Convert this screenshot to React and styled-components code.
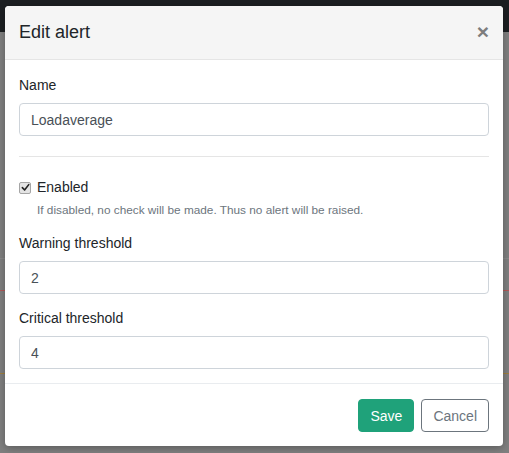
import React from "react";
import styled, { createGlobalStyle } from "styled-components";

const GlobalStyle = createGlobalStyle`
  html, body {
    margin: 0;
    padding: 0;
    height: 100%;
  }
  body {
    font-family: "Liberation Sans", Arial, sans-serif;
    color: #212529;
    background: #808080;
    overflow: hidden;
  }
`;

const App = () => {
  return (
    <>
      <GlobalStyle />
      <Page>
        <TopBar />
        <Backdrop>
          <ChartLine $top={258} $color="#8a8a8a" />
          <ChartLine $top={290} $color="#b35a5a" />
          <ChartLine $top={373} $color="#a08040" />
          <Dialog>
            <Header>
              <Title>Edit alert</Title>
              <CloseButton aria-label="Close">×</CloseButton>
            </Header>
            <Body>
              <Group>
                <Label>Name</Label>
                <Input defaultValue="Loadaverage" />
              </Group>
              <Divider />
              <CheckRow>
                <CheckBox role="checkbox" aria-checked="true">
                  <svg width="9" height="9" viewBox="0 0 10 10">
                    <path d="M1.5 5.2 L4 7.8 L8.6 1.8" fill="none" stroke="#222" strokeWidth="1.8" strokeLinecap="round" strokeLinejoin="round" />
                  </svg>
                </CheckBox>
                <CheckLabel>Enabled</CheckLabel>
              </CheckRow>
              <Help>If disabled, no check will be made. Thus no alert will be raised.</Help>
              <Group>
                <Label>Warning threshold</Label>
                <Input defaultValue="2" />
              </Group>
              <Group $last>
                <Label>Critical threshold</Label>
                <Input defaultValue="4" />
              </Group>
            </Body>
            <Footer>
              <Button $variant="primary">Save</Button>
              <Button>Cancel</Button>
            </Footer>
          </Dialog>
        </Backdrop>
      </Page>
    </>
  );
};

const Page = styled.div`
  width: 509px;
  height: 453px;
  display: flex;
  flex-direction: column;
  background: #808080;
`;

const TopBar = styled.div`
  height: 32px;
  background: #1c1f22;
  flex-shrink: 0;
`;

const Backdrop = styled.div`
  position: relative;
  flex: 1;
  background: #808080;
`;

const ChartLine = styled.div`
  position: absolute;
  left: 0;
  right: 0;
  top: ${(p) => p.$top - 32}px;
  height: 1px;
  background: ${(p) => p.$color};
`;

const Dialog = styled.div`
  position: absolute;
  top: -26px;
  left: 5px;
  width: 498px;
  background: #fff;
  border-radius: 4px;
  overflow: hidden;
  box-shadow: 0 2px 8px rgba(0, 0, 0, 0.3);
`;

const Header = styled.div`
  height: 53px;
  display: flex;
  align-items: center;
  justify-content: space-between;
  padding: 0 14px;
  background: #f5f5f5;
  border-bottom: 1px solid #e5e5e5;
  box-sizing: content-box;
`;

const Title = styled.h5`
  margin: 0;
  font-size: 18px;
  font-weight: 400;
  color: #212529;
`;

const CloseButton = styled.button`
  border: 0;
  background: none;
  padding: 0;
  font-family: "Liberation Sans", Arial, sans-serif;
  font-size: 21px;
  font-weight: 700;
  line-height: 1;
  color: #7d7d7d;
  margin-top: -3px;
`;

const Body = styled.div`
  padding: 15px 14px 14px;
`;

const Group = styled.div`
  margin-bottom: ${(p) => (p.$last ? 0 : 14)}px;
`;

const Label = styled.label`
  display: block;
  font-size: 14px;
  line-height: 21px;
  margin-bottom: 7px;
`;

const Input = styled.input`
  display: block;
  box-sizing: border-box;
  width: 100%;
  height: 33px;
  padding: 5px 11px;
  font-family: "Liberation Sans", Arial, sans-serif;
  font-size: 14px;
  color: #495057;
  border: 1px solid #ced4da;
  border-radius: 4px;
  background: #fff;
  outline: none;
`;

const Divider = styled.hr`
  margin: 20px 0 20px;
  border: 0;
  border-top: 1px solid #e5e5e5;
`;

const CheckRow = styled.div`
  display: flex;
  align-items: center;
  height: 21px;
`;

const CheckBox = styled.span`
  box-sizing: border-box;
  width: 12px;
  height: 12px;
  margin: 0 6px 0 0;
  display: flex;
  align-items: center;
  justify-content: center;
  background: #e4e4e4;
  border: 1px solid #a5a5a5;
  border-radius: 2px;
`;

const CheckLabel = styled.span`
  font-size: 14px;
  line-height: 21px;
`;

const Help = styled.div`
  font-size: 11.8px;
  line-height: 18px;
  color: #6c757d;
  margin: 3px 0 14px 18px;
`;

const Footer = styled.div`
  display: flex;
  justify-content: flex-end;
  gap: 7px;
  padding: 15px 14px 14px;
  border-top: 1px solid #e9ecef;
`;

const Button = styled.button`
  height: 33px;
  padding: 0 11px;
  font-family: "Liberation Sans", Arial, sans-serif;
  font-size: 14px;
  border-radius: 4px;
  border: 1px solid ${(p) => (p.$variant === "primary" ? "#1fa27a" : "#6c757d")};
  background: ${(p) => (p.$variant === "primary" ? "#1fa27a" : "#fff")};
  color: ${(p) => (p.$variant === "primary" ? "#fff" : "#6c757d")};
  cursor: pointer;
`;

export default App;
